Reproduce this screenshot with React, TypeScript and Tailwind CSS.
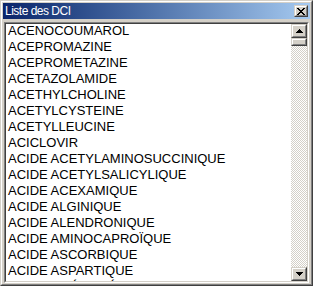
const items = [
  "ACENOCOUMAROL",
  "ACEPROMAZINE",
  "ACEPROMETAZINE",
  "ACETAZOLAMIDE",
  "ACETHYLCHOLINE",
  "ACETYLCYSTEINE",
  "ACETYLLEUCINE",
  "ACICLOVIR",
  "ACIDE ACETYLAMINOSUCCINIQUE",
  "ACIDE ACETYLSALICYLIQUE",
  "ACIDE ACEXAMIQUE",
  "ACIDE ALGINIQUE",
  "ACIDE ALENDRONIQUE",
  "ACIDE AMINOCAPROÏQUE",
  "ACIDE ASCORBIQUE",
  "ACIDE ASPARTIQUE",
  "ACIDE CHÉNODÉSOXYCHOLIQUE",
];

const Raised = ({ className = "", children }: { className?: string; children?: React.ReactNode }) => (
  <div className={`border border-t-[#d4d0c8] border-l-[#d4d0c8] border-r-[#404040] border-b-[#404040] bg-[#d4d0c8] ${className}`}>
    <div className="w-full h-full border border-t-white border-l-white border-r-[#808080] border-b-[#808080] flex items-center justify-center">
      {children}
    </div>
  </div>
);

const Arrow = ({ down = false }: { down?: boolean }) => (
  <svg width="7" height="4" viewBox="0 0 7 4" shapeRendering="crispEdges" className={down ? "rotate-180" : ""}>
    <path d="M3 0h1v1h-1z M2 1h3v1h-3z M1 2h5v1h-5z M0 3h7v1h-7z" fill="#000" />
  </svg>
);

const CloseGlyph = () => (
  <svg width="8" height="7" viewBox="0 0 8 7" shapeRendering="crispEdges">
    <path
      d="M0 0h2v1h-2z M6 0h2v1h-2z M1 1h2v1h-2z M5 1h2v1h-2z M2 2h4v1h-4z M3 3h2v1h-2z M2 4h4v1h-4z M1 5h2v1h-2z M5 5h2v1h-2z M0 6h2v1h-2z M6 6h2v1h-2z"
      fill="#000"
    />
  </svg>
);

export default function App() {
  return (
    <div
      className="w-[313px] h-[286px] border border-t-[#d4d0c8] border-l-[#d4d0c8] border-r-[#404040] border-b-[#404040] bg-[#d4d0c8]"
      style={{ fontFamily: '"Liberation Sans", Arial, sans-serif' }}
    >
      <div className="w-full h-full border border-t-white border-l-white border-r-[#808080] border-b-[#808080] p-px flex flex-col">
        {/* title bar */}
        <div className="h-4 shrink-0 flex items-center bg-linear-to-r from-[#0a246a] to-[#a6caf0]">
          <span className="pl-[2px] text-white text-[12px] leading-none tracking-[-0.5px]">Liste des DCI</span>
          <Raised className="ml-auto mr-[2px] w-[14px] h-[12px]">
            <CloseGlyph />
          </Raised>
        </div>

        {/* list box */}
        <div className="mt-[3px] mx-px flex-1 min-h-0 border border-t-[#808080] border-l-[#808080] border-r-white border-b-white">
          <div className="w-full h-full border border-t-[#404040] border-l-[#404040] border-r-[#d4d0c8] border-b-[#d4d0c8] flex">
            <div className="flex-1 bg-white overflow-hidden">
              <div className="-mt-px">
                {items.map((it) => (
                  <div key={it} className="pl-[2px] text-[13px] leading-[16px] text-black whitespace-nowrap">
                    {it}
                  </div>
                ))}
              </div>
            </div>
            <div className="w-4 flex flex-col bg-[repeating-conic-gradient(#d4d0c8_0_25%,#ffffff_0_50%)] bg-[length:2px_2px]">
              <Raised className="h-[14px] w-4 shrink-0">
                <Arrow />
              </Raised>
              <Raised className="h-[8px] w-4 shrink-0" />
              <div className="flex-1" />
              <Raised className="h-[14px] w-4 shrink-0">
                <Arrow down />
              </Raised>
            </div>
          </div>
        </div>
      </div>
    </div>
  );
}
